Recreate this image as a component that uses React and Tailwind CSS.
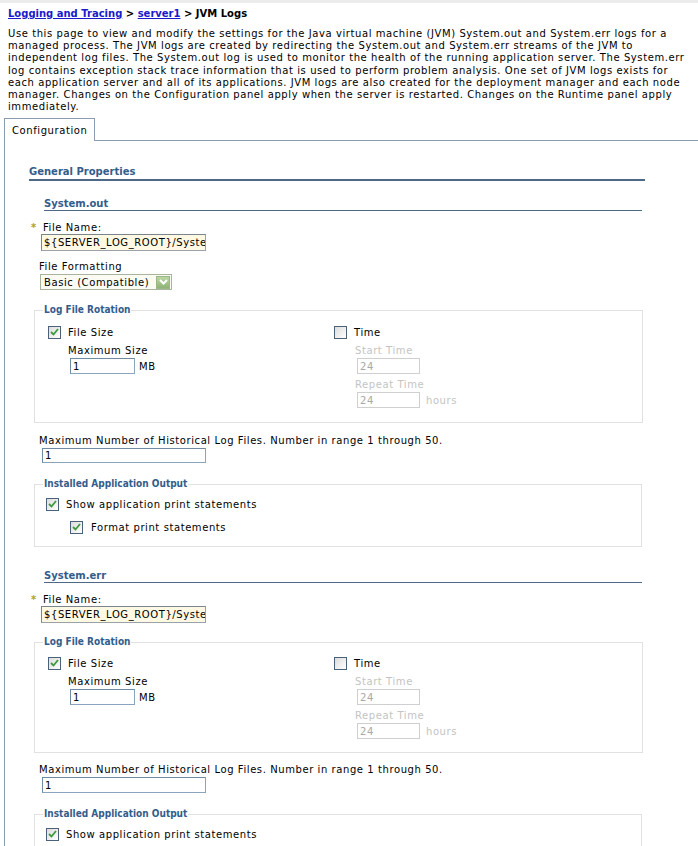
import React from "react";

const HEAD = "text-[#335d8b] font-bold tracking-normal";
const LEG = "text-[#335d8b] font-bold tracking-normal font-['DejaVu_Sans_Condensed','DejaVu_Sans',sans-serif]";

function Check({ checked }) {
  return (
    <span className="w-[13px] h-[13px] border border-[#4b6179] bg-linear-to-br from-[#dcdcdc] to-white flex items-center justify-center shrink-0">
      {checked && (
        <svg width="9" height="8" viewBox="0 0 9 8">
          <path d="M1 4 L3.5 6.5 L8 1" stroke="#3e9a3e" strokeWidth="1.8" fill="none" />
        </svg>
      )}
    </span>
  );
}

function TextBox({ value, w, h, disabled, yellow, cls = "" }) {
  return (
    <div
      className={
        "flex items-center pl-[2px] overflow-hidden whitespace-nowrap border " +
        (disabled
          ? "border-[#cfcfcf] text-[#a9a9a9] bg-white"
          : yellow
          ? "border-[#9aa1a8] border-t-[#7d858c] border-l-[#7d858c] bg-[#fff9e4] text-black"
          : "border-[#8aa4bd] border-t-[#6e8aa5] border-l-[#6e8aa5] bg-white text-black") +
        " " +
        cls
      }
      style={{ width: w, height: h }}
    >
      {value}
    </div>
  );
}

function Rotation({ first }) {
  return (
    <fieldset className={"ml-[5px] w-[609px] border border-[#e1e1e1] pl-[8px] pr-0 pt-0 m-0 min-w-0 " + (first ? "pb-[14px]" : "pb-[13px]")}>
      <legend className={"px-[1px] leading-[12px] " + LEG}>Log File Rotation</legend>
      <div className={"grid grid-cols-[286px_1fr] ml-[5px] " + (first ? "mt-[9px]" : "mt-[8px]")}>
        <div className="flex flex-col">
          <div className="flex items-center h-[14px] gap-[7px]">
            <Check checked />
            <span>File Size</span>
          </div>
          <div className="ml-[20px] mt-[6px] leading-[12px]">Maximum Size</div>
          <div className="ml-[22px] mt-[1px] flex items-center gap-[4px]">
            <TextBox value="1" w={65} h={16} />
            <span>MB</span>
          </div>
        </div>
        <div className="flex flex-col">
          <div className="flex items-center h-[14px] gap-[7px]">
            <Check />
            <span>Time</span>
          </div>
          <div className="ml-[21px] mt-[6px] leading-[12px] text-[#c4c4c4]">Start Time</div>
          <div className="ml-[23px] mt-[1px]">
            <TextBox value="24" w={63} h={16} disabled />
          </div>
          <div className="ml-[21px] mt-[5px] leading-[12px] text-[#c4c4c4]">Repeat Time</div>
          <div className="ml-[23px] mt-[1px] flex items-center gap-[6px]">
            <TextBox value="24" w={63} h={16} disabled />
            <span className="text-[#c4c4c4]">hours</span>
          </div>
        </div>
      </div>
    </fieldset>
  );
}

function Installed({ full }) {
  return (
    <fieldset className="ml-[5px] w-[608px] border border-[#e1e1e1] pl-[8px] pr-0 pb-[12px] pt-0 m-0 min-w-0">
      <legend className={"px-[1px] leading-[12px] " + LEG}>Installed Application Output</legend>
      <div className="ml-[3px] mt-[7px] flex items-center h-[14px] gap-[7px]">
        <Check checked />
        <span>Show application print statements</span>
      </div>
      {full && (
        <div className="ml-[27px] mt-[9px] flex items-center h-[14px] gap-[8px]">
          <Check checked />
          <span>Format print statements</span>
        </div>
      )}
    </fieldset>
  );
}

function Section({ title, first }) {
  return (
    <div className="flex flex-col">
      <div className={"ml-[15px] w-[598px] leading-[12px] border-b border-[#4d6987] " + HEAD}>{title}</div>
      <div className="ml-[2px] mt-[11px] flex items-center leading-[12px]">
        <span className="text-[#b3a11a] font-bold w-[12px]">*</span>
        <span>File Name:</span>
      </div>
      <div className="ml-[12px]">
        <TextBox value="${SERVER_LOG_ROOT}/Syste" w={165} h={17} yellow />
      </div>
      {first ? (
        <>
          <div className="ml-[10px] mt-[10px] leading-[12px]">File Formatting</div>
          <div className="ml-[11px] mt-[1px] w-[132px] h-[16px] border border-[#aab49c] bg-[#fbfbf4] flex items-center justify-between pl-[3px] pr-[1px]">
            <span className="whitespace-nowrap">Basic (Compatible)</span>
            <span className="w-[14px] h-[13px] shrink-0 bg-linear-to-b from-[#bcd7a5] to-[#8eb377] border border-[#9ab887] flex items-center justify-center">
              <svg width="9" height="6" viewBox="0 0 9 6">
                <path d="M1 1 L4.5 4.5 L8 1" stroke="#fff" strokeWidth="2" fill="none" />
              </svg>
            </span>
          </div>
          <div className="mt-[14px]">
            <Rotation first />
          </div>
        </>
      ) : (
        <div className="mt-[13px]">
          <Rotation />
        </div>
      )}
      <div className={"ml-[10px] leading-[12px] whitespace-nowrap " + (first ? "mt-[12px]" : "mt-[11px]")}>
        Maximum Number of Historical Log Files. Number in range 1 through 50.
      </div>
      <div className="ml-[13px] mt-[1px]">
        <TextBox value="1" w={164} h={first ? 15 : 16} />
      </div>
      <div className="mt-[15px]">
        <Installed full={first} />
      </div>
    </div>
  );
}

export default function App() {
  const lines = [
    "Use this page to view and modify the settings for the Java virtual machine (JVM) System.out and System.err logs for a",
    "managed process. The JVM logs are created by redirecting the System.out and System.err streams of the JVM to",
    "independent log files. The System.out log is used to monitor the health of the running application server. The System.err",
    "log contains exception stack trace information that is used to perform problem analysis. One set of JVM logs exists for",
    "each application server and all of its applications. JVM logs are also created for the deployment manager and each node",
    "manager. Changes on the Configuration panel apply when the server is restarted. Changes on the Runtime panel apply",
    "immediately.",
  ];
  return (
    <div className="w-[698px] h-[846px] overflow-hidden bg-white text-black text-[10px] tracking-[0.58px] font-['DejaVu_Sans',Verdana,sans-serif]">
      <div className="h-[3px] bg-[#ececec]" />
      <div className="px-[8px] pt-[5px]">
        <div className="font-bold tracking-normal leading-[12px] whitespace-nowrap">
          <a className="text-[#1a1acc] underline">Logging and Tracing</a>
          <span> &gt; </span>
          <a className="text-[#1a1acc] underline">server1</a>
          <span> &gt; JVM Logs</span>
        </div>
        <div className="mt-[8px] leading-[12.2px]">
          {lines.map((l, i) => (
            <div key={i} className="whitespace-nowrap h-[12.2px]">
              {l}
            </div>
          ))}
        </div>
      </div>
      <div className="mt-[5px] flex items-end">
        <div className="ml-[4px] h-[23px] border border-b-0 border-[#8a9cb0] px-[7px] flex items-center">
          Configuration
        </div>
        <div className="flex-1 border-b border-[#8a9cb0]" />
      </div>
      <div className="ml-[4px] border-l border-[#8a9cb0] pl-[24px] pt-[25px] h-[800px]">
        <div className={"w-[616px] leading-[12px] pb-[1px] border-b-2 border-[#4d6987] " + HEAD}>General Properties</div>
        <div className="mt-[17px]">
          <Section title="System.out" first />
        </div>
        <div className="mt-[23px]">
          <Section title="System.err" />
        </div>
      </div>
    </div>
  );
}
